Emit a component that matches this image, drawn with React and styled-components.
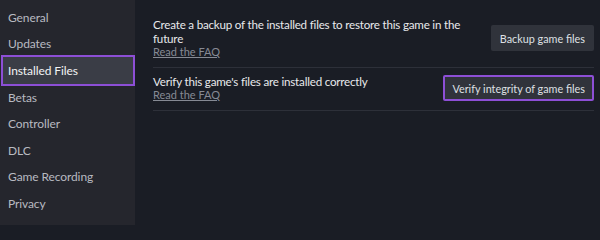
import styled, { createGlobalStyle } from "styled-components";

const Global = createGlobalStyle`
  html, body {
    margin: 0;
    padding: 0;
    background: #1a1d25;
  }
  body {
    font-family: Lato, "Noto Sans", Arial, sans-serif;
    -webkit-font-smoothing: antialiased;
  }
`;

const Page = styled.div`
  display: flex;
  width: 600px;
  height: 225px;
  overflow: hidden;
`;

const Sidebar = styled.nav`
  flex: 0 0 135px;
  background: #25262d;
  padding: 4px 0 0 1px;
  box-sizing: border-box;
  display: flex;
  flex-direction: column;
`;

const NavItem = styled.div`
  height: ${(p) => (p.$active ? "31px" : "26.6px")};
  margin: ${(p) => (p.$active ? "-2.2px 0" : "0")};
  box-sizing: border-box;
  display: flex;
  align-items: center;
  padding-left: ${(p) => (p.$active ? "5px" : "7px")};
  font-size: 12px;
  letter-spacing: -0.1px;
  color: ${(p) => (p.$active ? "#f2f3f5" : "#b8bac1")};
  background: ${(p) => (p.$active ? "#3a3d46" : "transparent")};
  border: ${(p) => (p.$active ? "2px solid #8d4fd6" : "none")};
`;

const Main = styled.main`
  flex: 1;
  padding: 11px 6px 0 18px;
`;

const Row = styled.div`
  display: flex;
  align-items: center;
  justify-content: space-between;
  gap: 10px;
  padding: 7px 0 8px;
  border-bottom: 1px solid #2d3039;
`;

const Info = styled.div`
  display: flex;
  flex-direction: column;
  min-width: 0;
`;

const Label = styled.div`
  font-size: 11.6px;
  line-height: 13.5px;
  letter-spacing: -0.2px;
  color: #e8e9ec;
  white-space: nowrap;
`;

const Faq = styled.a`
  font-size: 11px;
  line-height: 13.5px;
  color: #868a94;
  text-decoration: underline;
`;

const Button = styled.button`
  flex: 0 0 auto;
  height: 26px;
  padding: 0 ${(p) => (p.$focus ? "7px" : "9px")};
  font-family: inherit;
  font-size: 10.8px;
  color: #dfe0e4;
  background: #30333b;
  border: ${(p) => (p.$focus ? "2px solid #8d4fd6" : "none")};
  border-radius: 2px;
  cursor: pointer;
`;

const navItems = [
  "General",
  "Updates",
  "Installed Files",
  "Betas",
  "Controller",
  "DLC",
  "Game Recording",
  "Privacy",
];

export default function App() {
  return (
    <>
      <Global />
      <Page>
        <Sidebar>
          {navItems.map((item) => (
            <NavItem key={item} $active={item === "Installed Files"}>
              {item}
            </NavItem>
          ))}
        </Sidebar>
        <Main>
          <Row>
            <Info>
              <Label>
                Create a backup of the installed files to restore this game in the
                <br />
                future
              </Label>
              <Faq>Read the FAQ</Faq>
            </Info>
            <Button>Backup game files</Button>
          </Row>
          <Row>
            <Info>
              <Label>Verify this game's files are installed correctly</Label>
              <Faq>Read the FAQ</Faq>
            </Info>
            <Button $focus>Verify integrity of game files</Button>
          </Row>
        </Main>
      </Page>
    </>
  );
}
